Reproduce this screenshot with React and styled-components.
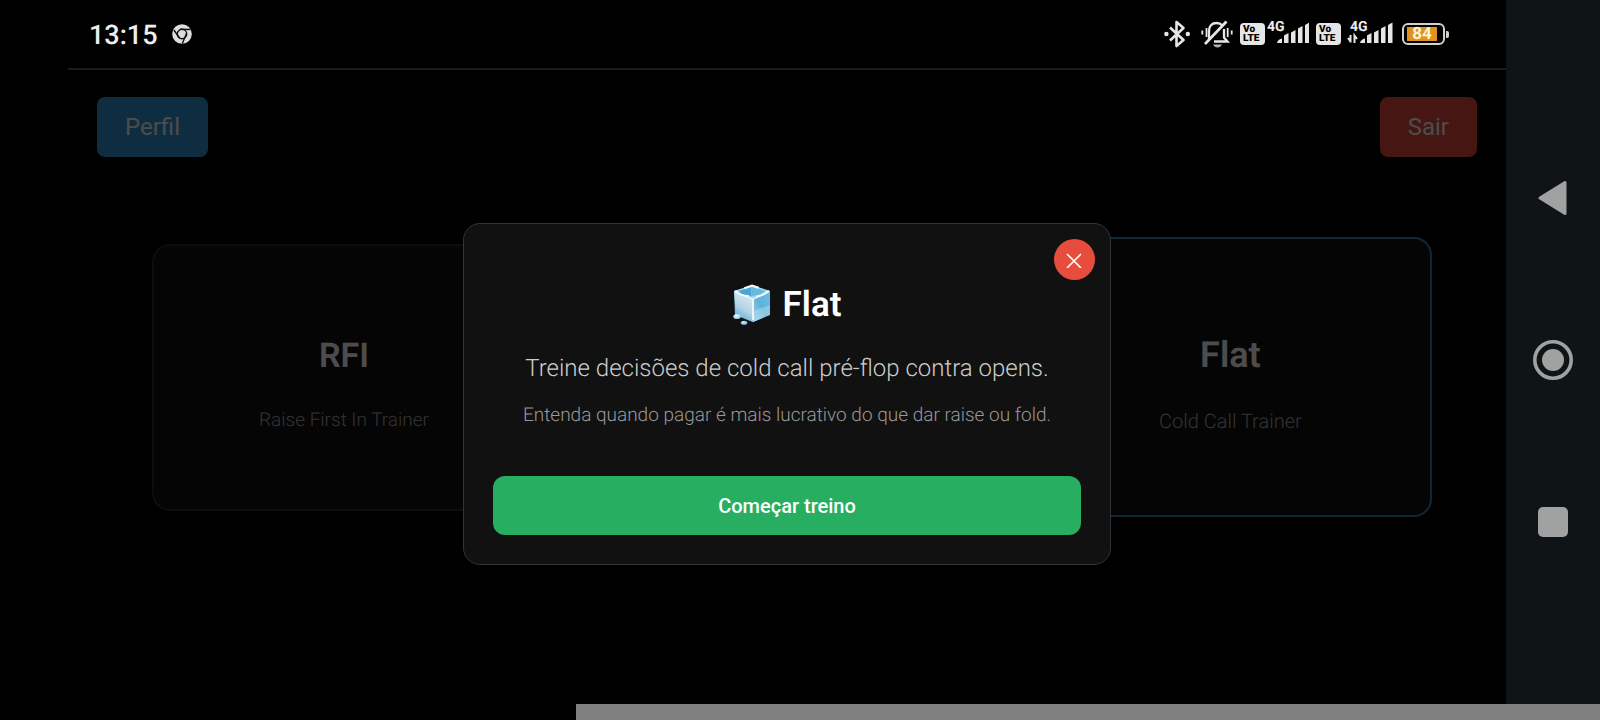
import React from "react"
import styled, { createGlobalStyle } from "styled-components"

const GlobalStyle = createGlobalStyle`
  * {
    box-sizing: border-box;
  }

  body {
    margin: 0;
    background: #000;
    color: #fff;
    font-family: Roboto, "Liberation Sans", sans-serif;
    text-rendering: geometricPrecision;
  }

  h2, p {
    margin: 0;
  }
`

const BluetoothIcon = () => (
  <svg width="30" height="30" viewBox="0 0 30 30" aria-hidden="true">
    <path d="M6 8.500 19.500 21 12.500 27V3l7 6L6 21.500" fill="none" stroke="#e6e6e6" strokeWidth="2.600" strokeLinejoin="round" />
    <circle cx="2.400" cy="15" r="2.200" fill="#e6e6e6" />
    <circle cx="23.800" cy="15" r="2.200" fill="#e6e6e6" />
  </svg>
)

const MutedIcon = () => (
  <svg width="32" height="30" viewBox="0 0 32 30" aria-hidden="true">
    <g fill="none" stroke="#e6e6e6" strokeWidth="2.300">
      <path d="M8 20.500v-8.500c0-5 3-8 7.500-8 2.500 0 4.500 1 6 2.500M23 10v8.500l3.500 4H13" />
      <path d="M4 25 25.500 2.500" strokeWidth="2.700" />
      <path d="M5.500 9v9M1.300 11.500v4M26.700 9v9M30.700 11.500v4" strokeWidth="1.800" />
    </g>
    <path d="M12 25.500h9c-1 2-2.500 3-4.500 3s-3.500-1-4.500-3z" fill="#b0b0b0" />
  </svg>
)

const bars = [
  "M0 20c.5-2.500 2.500-4 5-4.500V20z",
  "M7 12.500 11.500 10V20H7z",
  "M14 9.500 18.500 7V20H14z",
  "M21 5.500 25.500 3V20H21z",
  "M28 2 32.500 -.5V20H28z",
]

const SignalIcon = ({ width, start, arrows }) => (
  <svg width={width} height="30" viewBox={`0 0 ${width} 30`} aria-label="4G">
    <text x={start} y="12" fill="#eee" fontSize="14" fontWeight="700">4G</text>
    {arrows && (
      <path d="M7.500 16v7.500M5 19l2.500 3.500M11.500 24v-7.500L14 20" fill="none" stroke="#e6e6e6" strokeWidth="2" />
    )}
    <g transform={`translate(${start + 10} 4)`} fill="#e6e6e6">
      {bars.map((d) => <path key={d} d={d} />)}
    </g>
  </svg>
)

const ChromeIcon = () => (
  <svg width="20" height="20" viewBox="0 0 20 20" aria-hidden="true">
    <circle cx="10" cy="10" r="9.800" fill="#dedede" />
    <circle cx="10" cy="10" r="4.700" fill="none" stroke="#111" strokeWidth="1.400" />
    <path d="M8 5.300 18.500 5.500M14.500 9.500 10.300 19.500M7.500 14 1.900 6" stroke="#111" strokeWidth="1.400" />
  </svg>
)

const IceIcon = () => (
  <svg width="38" height="42" viewBox="0 0 38 42" aria-hidden="true">
    <defs>
      <linearGradient id="iceLeft" x1="0.700" y1="0" x2="0.300" y2="1">
        <stop offset="0" stopColor="#d8ecf5" />
        <stop offset="0.550" stopColor="#b4d5e5" />
        <stop offset="1" stopColor="#58a8cf" />
      </linearGradient>
      <linearGradient id="iceRight" x1="0" y1="1" x2="1" y2="0">
        <stop offset="0" stopColor="#a9d4ea" />
        <stop offset="0.500" stopColor="#5fb2dc" />
        <stop offset="1" stopColor="#69bfe8" />
      </linearGradient>
    </defs>
    <path d="M1 7 19 1l18 6v24l-17 7L2 31z" fill="#73bfe2" />
    <path d="M1 7 20 15v23L3 30.500z" fill="url(#iceLeft)" />
    <path d="M20 15 37 7v23.500L20 38z" fill="url(#iceRight)" />
    <path d="M20 27 37 21v9.500L20 38z" fill="#b5d9eb" opacity="0.500" />
    <path d="M1.500 7 19 1.500 36.500 7 20 14.500z" fill="#9bd5ef" />
    <path d="M6 7 18.500 3v9L9 11z" fill="#4ba6d4" />
    <path d="M19 3 32 7l-6 4-7 1z" fill="#67b9e0" />
    <path d="M3 7c3 4 9 5 12 5M12 4l7-2.500 6 2M35 7c-3 4-8 5-11 5.500" fill="none" stroke="#f4fbff" strokeWidth="1.900" strokeLinecap="round" />
    <path d="M1.500 7.500 20 15 36.500 7.500" fill="none" stroke="#f5fbff" strokeWidth="1.300" />
    <path d="M20 15v21" stroke="#f5fbff" strokeWidth="1.700" />
    <ellipse cx="4" cy="32.500" rx="3.700" ry="2.500" fill="#a8dff5" />
    <ellipse cx="11" cy="38.700" rx="3.300" ry="2" fill="#80cbed" />
    <ellipse cx="3.500" cy="31.800" rx="2" ry="1" fill="#eefaff" />
    <ellipse cx="10.500" cy="38.200" rx="1.600" ry=".8" fill="#e3f6ff" />
  </svg>
)

const modes = [
  { name: "RFI", description: "Raise First In Trainer" },
  { name: "Flat", description: "Cold Call Trainer", active: true },
]

const App = () => {
  return (
    <>
      <GlobalStyle />
      <Device>
        <Screen>
          <StatusBar>
            <StatusGroup $gap={14}>
              <Clock>13:15</Clock>
              <ChromeIcon />
            </StatusGroup>
            <StatusGroup $gap={7}>
              <BluetoothIcon />
              <MutedIcon />
              <StatusGroup $gap={2}>
                <VolteBadge><span>Vo</span><span>LTE</span></VolteBadge>
                <SignalIcon width={42} start={0} />
              </StatusGroup>
              <StatusGroup $gap={2}>
                <VolteBadge><span>Vo</span><span>LTE</span></VolteBadge>
                <SignalIcon width={52} start={7} arrows />
              </StatusGroup>
              <Battery>
                <BatteryBody><BatteryLevel>84</BatteryLevel></BatteryBody>
                <BatteryTip />
              </Battery>
            </StatusGroup>
          </StatusBar>
          <Page>
            <Toolbar>
              <ToolbarButton type="button" $color="#3498db">Perfil</ToolbarButton>
              <ToolbarButton type="button" $color="#e74c3c">Sair</ToolbarButton>
            </Toolbar>
            <Modes>
              {modes.map((mode) => (
                <ModeCard key={mode.name} $active={mode.active}>
                  <ModeName $active={mode.active}>{mode.name}</ModeName>
                  <ModeDescription $active={mode.active}>{mode.description}</ModeDescription>
                </ModeCard>
              ))}
            </Modes>
            <Overlay>
              <Modal role="dialog" aria-labelledby="modal-title">
                <CloseButton type="button" aria-label="Fechar">
                  <svg width="17" height="17" viewBox="0 0 17 17">
                    <path d="m1 3 14 14M15 3 1 17" stroke="#fff" strokeWidth="1.600" />
                  </svg>
                </CloseButton>
                <ModalTitle id="modal-title">
                  <IceIcon />
                  Flat
                </ModalTitle>
                <ModalText>Treine decisões de cold call pré-flop contra opens.</ModalText>
                <ModalHint>Entenda quando pagar é mais lucrativo do que dar raise ou fold.</ModalHint>
                <StartButton type="button">Começar treino</StartButton>
              </Modal>
            </Overlay>
          </Page>
        </Screen>
        <SystemNav>
          <NavButton type="button" aria-label="Voltar">
            <svg width="40" height="40" viewBox="0 0 40 40">
              <path d="M7 20 32 4.500v31z" fill="#a0a2a1" stroke="#a0a2a1" strokeWidth="3" strokeLinejoin="round" />
            </svg>
          </NavButton>
          <NavButton type="button" aria-label="Início">
            <svg width="40" height="40" viewBox="0 0 40 40">
              <circle cx="20" cy="20" r="18.200" fill="none" stroke="#a0a2a1" strokeWidth="3.600" />
              <circle cx="20" cy="20" r="11" fill="#a0a2a1" />
            </svg>
          </NavButton>
          <NavButton type="button" aria-label="Recentes">
            <svg width="40" height="40" viewBox="0 0 40 40">
              <rect x="5" y="5" width="30" height="30" rx="5" fill="#a0a2a1" />
            </svg>
          </NavButton>
        </SystemNav>
        <BottomStrip />
      </Device>
    </>
  )
}

const Device = styled.div`
  position: relative;
  display: flex;
  min-height: 100vh;
`

const Screen = styled.div`
  flex: 1;
  display: flex;
  flex-direction: column;
  padding-left: 68px;
`

const StatusBar = styled.header`
  display: flex;
  align-items: center;
  justify-content: space-between;
  height: 68px;
  padding: 0 57px 0 21px;
`

const StatusGroup = styled.div`
  display: flex;
  align-items: center;
  gap: ${({ $gap }) => $gap}px;
`

const Clock = styled.time`
  padding-top: 2px;
  color: #eee;
  font-size: 27px;
  font-weight: 500;
  line-height: 32px;
`

const VolteBadge = styled.div`
  display: flex;
  flex-direction: column;
  width: 25px;
  height: 22px;
  padding: 2px 3px;
  border-radius: 4px;
  background: #e6e6e6;
  color: #000;
  font-size: 10px;
  font-weight: 900;
  line-height: 9px;
`

const Battery = styled.div`
  display: flex;
  align-items: center;
  gap: 1px;
`

const BatteryBody = styled.div`
  width: 43px;
  height: 22px;
  padding: 2px 3px;
  border: 2px solid #d5d0c8;
  border-radius: 6px;
`

const BatteryLevel = styled.div`
  width: 30px;
  height: 14px;
  background: #dc931f;
  color: #fff3d6;
  font-size: 17px;
  font-weight: 700;
  line-height: 15px;
  text-align: center;
`

const BatteryTip = styled.div`
  width: 3px;
  height: 7px;
  border-radius: 0 2px 2px 0;
  background: #d5d0c8;
`

const Page = styled.main`
  position: relative;
  flex: 1;
  border-top: 2px solid #5c5c5c;
`

const Toolbar = styled.div`
  display: flex;
  justify-content: space-between;
  padding: 27px 29px 0;
`

const ToolbarButton = styled.button`
  height: 60px;
  padding: 0 28px;
  border: 0;
  border-radius: 8px;
  background: ${({ $color }) => $color};
  color: #fff;
  font: 400 24px Roboto, sans-serif;
`

const Modes = styled.div`
  display: flex;
  align-items: center;
  justify-content: space-between;
  padding: 80px 74px 0 84px;
`

const ModeCard = styled.article`
  display: flex;
  flex-direction: column;
  align-items: center;
  justify-content: center;
  gap: ${({ $active }) => ($active ? 30 : 28)}px;
  width: ${({ $active }) => ($active ? "31.5%" : "30%")};
  height: ${({ $active }) => ($active ? 280 : 267)}px;
  padding-top: 13px;
  border: 2px solid ${({ $active }) => ($active ? "#2f82ba" : "#2c2c2c")};
  border-radius: 18px;
  background: #111;
`

const ModeName = styled.h2`
  font-size: ${({ $active }) => ($active ? 36 : 34)}px;
  font-weight: 600;
  line-height: 44px;
`

const ModeDescription = styled.p`
  color: #aaa;
  font-size: ${({ $active }) => ($active ? 20 : 19)}px;
  font-weight: 300;
  line-height: 28px;
`

const Overlay = styled.div`
  position: absolute;
  inset: -2px 0 0;
  display: flex;
  align-items: center;
  justify-content: center;
  background: rgba(0, 0, 0, 0.7);
`

const Modal = styled.section`
  position: relative;
  display: flex;
  flex-direction: column;
  align-items: center;
  width: 648px;
  padding: 59px 29px 29px;
  border: 1px solid #333;
  border-radius: 17px;
  background: #111;
  text-align: center;
`

const CloseButton = styled.button`
  position: absolute;
  top: 15px;
  right: 15px;
  display: flex;
  align-items: center;
  justify-content: center;
  width: 41px;
  height: 41px;
  padding: 0;
  border: 0;
  border-radius: 50%;
  background: #e74c3c;
`

const ModalTitle = styled.h2`
  display: flex;
  align-items: center;
  gap: 12px;
  font-size: 35px;
  font-weight: 600;
  line-height: 44px;
`

const ModalText = styled.p`
  margin-top: 25px;
  color: #ccc;
  font-size: 24px;
  font-weight: 300;
  line-height: 32px;
`

const ModalHint = styled.p`
  margin-top: 17px;
  color: #999;
  font-size: 19px;
  font-weight: 300;
  line-height: 28px;
`

const StartButton = styled.button`
  width: 100%;
  height: 59px;
  margin-top: 47px;
  border: 0;
  border-radius: 12px;
  background: #27ae60;
  color: #fff;
  font: 500 20px Roboto, sans-serif;
`

const SystemNav = styled.nav`
  display: flex;
  flex-direction: column;
  align-items: center;
  justify-content: center;
  gap: 122px;
  width: 94px;
  background: #0f1416;
`

const NavButton = styled.button`
  display: flex;
  padding: 0;
  border: 0;
  background: none;
`

/* sits on top of both the screen and the navigation column */
const BottomStrip = styled.div`
  position: absolute;
  right: 0;
  bottom: 0;
  left: 36%;
  height: 16px;
  background: #808080;
`

export default App
